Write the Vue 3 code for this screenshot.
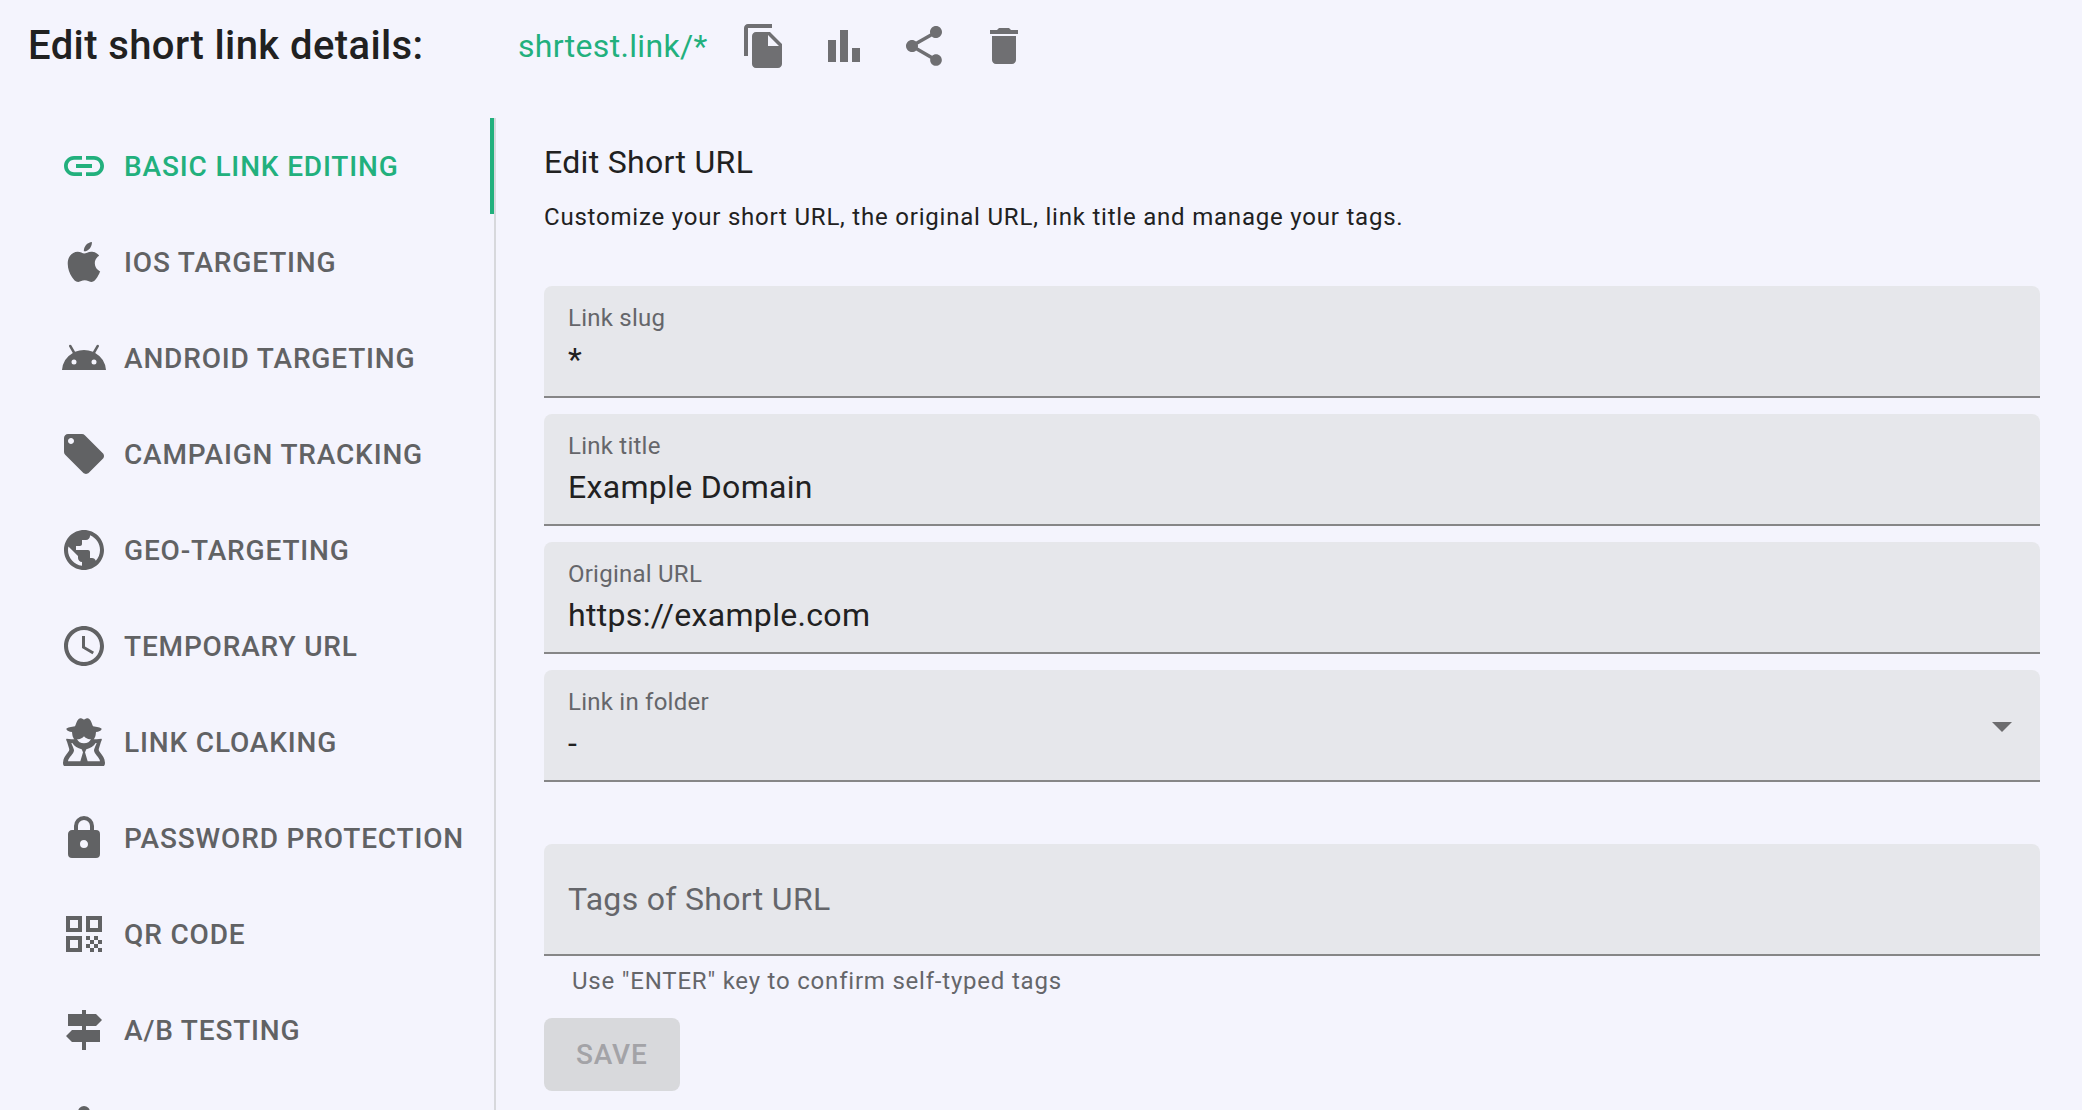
<script setup>
import { ref } from 'vue'

const tabs = [
  { label: 'Basic link editing', icon: 'M3.9 12c0-1.71 1.39-3.1 3.1-3.1h4V7H7c-2.76 0-5 2.24-5 5s2.24 5 5 5h4v-1.9H7c-1.71 0-3.1-1.39-3.1-3.1zM8 13h8v-2H8v2zm9-6h-4v1.9h4c1.71 0 3.1 1.39 3.1 3.1s-1.39 3.1-3.1 3.1h-4V17h4c2.76 0 5-2.24 5-5s-2.24-5-5-5z' },
  { label: 'iOS targeting', icon: 'M18.71 19.5C17.88 20.74 17 21.95 15.66 21.97C14.32 22 13.89 21.18 12.37 21.18C10.84 21.18 10.37 21.95 9.1 22C7.79 22.05 6.8 20.68 5.96 19.47C4.25 17 2.94 12.45 4.7 9.39C5.57 7.87 7.13 6.91 8.82 6.88C10.1 6.86 11.32 7.75 12.11 7.75C12.89 7.75 14.37 6.68 15.92 6.84C16.57 6.87 18.39 7.1 19.56 8.82C19.47 8.88 17.39 10.1 17.41 12.63C17.44 15.65 20.06 16.66 20.09 16.67C20.06 16.74 19.67 18.11 18.71 19.5M13 3.5C13.73 2.67 14.94 2.04 15.94 2C16.07 3.17 15.6 4.35 14.9 5.19C14.21 6.04 13.07 6.7 11.95 6.61C11.8 5.46 12.36 4.26 13 3.5Z' },
  { label: 'Android targeting', icon: 'M17.6 9.48l1.84-3.18c.16-.31.04-.69-.26-.85-.29-.15-.65-.06-.83.22l-1.88 3.24a11.463 11.463 0 0 0-8.94 0L5.65 5.67c-.19-.29-.58-.38-.87-.2-.28.18-.37.54-.22.83L6.4 9.48A10.78 10.78 0 0 0 1 18h22a10.78 10.78 0 0 0-5.4-8.52zM7 15.25a1.25 1.25 0 1 1 0-2.5 1.25 1.25 0 0 1 0 2.5zm10 0a1.25 1.25 0 1 1 0-2.5 1.25 1.25 0 0 1 0 2.5z' },
  { label: 'Campaign tracking', icon: 'M21.41 11.58l-9-9C12.05 2.22 11.55 2 11 2H4c-1.1 0-2 .9-2 2v7c0 .55.22 1.05.59 1.42l9 9c.36.36.86.58 1.41.58.55 0 1.05-.22 1.41-.59l7-7c.37-.36.59-.86.59-1.41 0-.55-.23-1.06-.59-1.42zM5.5 7C4.67 7 4 6.33 4 5.5S4.67 4 5.5 4 7 4.67 7 5.5 6.33 7 5.5 7z' },
  { label: 'Geo-targeting', icon: 'M12 2C6.48 2 2 6.48 2 12s4.48 10 10 10 10-4.48 10-10S17.52 2 12 2zm-1 17.93c-3.95-.49-7-3.85-7-7.93 0-.62.08-1.21.21-1.79L9 15v1c0 1.1.9 2 2 2v1.93zm6.9-2.54c-.26-.81-1-1.39-1.9-1.39h-1v-3c0-.55-.45-1-1-1H8v-2h2c.55 0 1-.45 1-1V7h2c1.1 0 2-.9 2-2v-.41c2.93 1.19 5 4.06 5 7.41 0 2.08-.8 3.97-2.1 5.39z' },
  { label: 'Temporary URL', icon: 'M11.99 2C6.47 2 2 6.48 2 12s4.47 10 9.99 10C17.52 22 22 17.52 22 12S17.52 2 11.99 2zM12 20c-4.42 0-8-3.58-8-8s3.58-8 8-8 8 3.58 8 8-3.58 8-8 8zm.5-13H11v6l5.25 3.15.75-1.23-4.5-2.67z' },
  { label: 'Link cloaking', box: '0 0 144 144', icon: 'M72 5C66 2 61 -1 56 3C50 8 49 17 45 25C34 27 22 28 19 33C20 39 28 41 36 42L37 50C38 56 40 60 43 64L34 64L20 62C17 63 19 68 21 71L27 91C29 96 27 99 24 103C16 113 10 121 9 134C9 141 11 144 15 144H129C133 144 135 141 135 134C134 121 128 113 120 103C117 99 115 96 117 91L123 71C125 68 127 63 124 62L110 64L101 64C104 60 106 56 107 50L108 42C116 41 124 39 125 33C122 28 110 27 99 25C95 17 94 8 88 3C83 -1 78 2 72 5ZM51 63C58 65 67 61 72 55C77 61 86 65 93 63C90 71 82 76 72 76C62 76 54 71 51 63ZM37 75C43 85 53 90 65 94L69 103L61 130H24C25 118 43 107 42 96C41 91 36 81 34 75ZM107 75C101 85 91 90 79 94L75 103L83 130H120C119 118 101 107 102 96C103 91 108 81 110 75Z' },
  { label: 'Password protection', icon: 'M12 17A2 2 0 0 0 14 15C14 13.89 13.1 13 12 13A2 2 0 0 0 10 15A2 2 0 0 0 12 17M18 8A2 2 0 0 1 20 10V20A2 2 0 0 1 18 22H6A2 2 0 0 1 4 20V10C4 8.89 4.9 8 6 8H7V6A5 5 0 0 1 12 1A5 5 0 0 1 17 6V8H18M12 3A3 3 0 0 0 9 6V8H15V6A3 3 0 0 0 12 3Z' },
  { label: 'QR code', icon: 'M3 11h8V3H3v8zm2-6h4v4H5V5zM3 21h8v-8H3v8zm2-6h4v4H5v-4zM13 3v8h8V3h-8zm6 6h-4V5h4v4zM13 13h2v2h-2zM17 13h2v2h-2zM15 15h2v2h-2zM19 15h2v2h-2zM13 17h2v2h-2zM17 17h2v2h-2zM15 19h2v2h-2zM19 19h2v2h-2z' },
  { label: 'A/B testing', icon: 'M13 10h5l3-3-3-3h-5V2h-2v2H4v6h7v2H6l-3 3 3 3h5v4h2v-4h7v-6h-7v-2z' },
  { label: '', icon: 'M12 2a3 3 0 1 1 0 6 3 3 0 0 1 0-6zM5 22v-7a5 5 0 0 1 5-5h4a5 5 0 0 1 5 5v7z' },
]

const actions = [
  { name: 'Copy', icon: 'M16 1H4c-1.1 0-2 .9-2 2v14h2V3h12V1zm-1 4l6 6v10c0 1.1-.9 2-2 2H7.99C6.89 23 6 22.1 6 21l.01-14c0-1.1.89-2 1.99-2h7zm-1 7h5.5L14 6.5V12z' },
  { name: 'Statistics', icon: 'M4 9h4v11H4zM10 4h4v16h-4zM16 13h4v7h-4z' },
  { name: 'Share', icon: 'M18 16.08c-.76 0-1.44.3-1.96.77L8.91 12.7c.05-.23.09-.46.09-.7s-.04-.47-.09-.7l7.05-4.11c.54.5 1.25.81 2.04.81 1.66 0 3-1.34 3-3s-1.34-3-3-3-3 1.34-3 3c0 .24.04.47.09.7L8.04 9.81C7.5 9.31 6.79 9 6 9c-1.66 0-3 1.34-3 3s1.34 3 3 3c.79 0 1.5-.31 2.04-.81l7.12 4.16c-.05.21-.08.43-.08.65 0 1.61 1.31 2.92 2.92 2.92 1.61 0 2.92-1.31 2.92-2.92s-1.31-2.92-2.92-2.92z' },
  { name: 'Delete', icon: 'M6 19c0 1.1.9 2 2 2h8c1.1 0 2-.9 2-2V7H6v12zM19 4h-3.5l-1-1h-5l-1 1H5v2h14V4z' },
]

const active = ref(0)
const slug = ref('*')
const title = ref('Example Domain')
const url = ref('https://example.com')
const folder = ref('-')
const tags = ref('')
</script>

<template>
  <div class="page">
    <header class="top">
      <h1>Edit short link details:</h1>
      <a class="short" href="#">shrtest.link/*</a>
      <div class="actions">
        <button v-for="a in actions" :key="a.name" type="button" :aria-label="a.name">
          <svg viewBox="0 0 24 24"><path :d="a.icon" /></svg>
        </button>
      </div>
    </header>

    <div class="body">
      <nav class="tabs">
        <button
          v-for="(t, i) in tabs"
          :key="i"
          type="button"
          :class="{ active: active === i }"
          @click="active = i"
        >
          <svg :viewBox="t.box || '0 0 24 24'"><path :d="t.icon" fill-rule="evenodd" /></svg>
          <span>{{ t.label.toUpperCase() }}</span>
        </button>
      </nav>

      <main class="panel">
        <h2>Edit Short URL</h2>
        <p class="intro">Customize your short URL, the original URL, link title and manage your tags.</p>

        <form @submit.prevent>
          <div class="field">
            <label for="slug">Link slug</label>
            <input id="slug" v-model="slug" type="text" />
          </div>
          <div class="field">
            <label for="title">Link title</label>
            <input id="title" v-model="title" type="text" />
          </div>
          <div class="field">
            <label for="url">Original URL</label>
            <input id="url" v-model="url" type="text" />
          </div>
          <div class="field">
            <label for="folder">Link in folder</label>
            <select id="folder" v-model="folder">
              <option>-</option>
            </select>
            <svg class="arrow" viewBox="0 0 20 10"><path d="M0 0h20L10 10z" /></svg>
          </div>
          <div class="field tags">
            <input v-model="tags" type="text" aria-label="Tags of Short URL" placeholder="Tags of Short URL" />
          </div>
          <p class="hint">Use "ENTER" key to confirm self-typed tags</p>
          <button class="save" type="submit" disabled>SAVE</button>
        </form>
      </main>
    </div>
  </div>
</template>

<style>
body {
  margin: 0;
  background: #f4f4fd;
}
</style>

<style scoped>
.page {
  display: flex;
  flex-direction: column;
  height: 100vh;
  overflow: hidden;
  background: #f4f4fd;
  color: #212121;
  font-family: Roboto, "Liberation Sans", sans-serif;
  -webkit-font-smoothing: antialiased;
}

h1,
h2,
p {
  margin: 0;
}

button,
input,
select {
  border: 0;
  padding: 0;
  background: none;
  font-family: inherit;
  color: inherit;
}

svg {
  display: block;
  flex: none;
  width: 48px;
  height: 48px;
  fill: currentColor;
}

/* Regular text carries light tracking, buttons and captions a wider one */
h1,
h2,
.short,
.field label,
.field input,
.field select {
  letter-spacing: 0.01em;
}

.tabs button,
.save {
  letter-spacing: 0.03em;
}

.intro,
.hint {
  letter-spacing: 0.033em;
}

.top {
  display: flex;
  align-items: center;
  flex: none;
  height: 92px;
  margin-bottom: 26px;
  padding-left: 28px;
}

h1 {
  width: 490px;
  font-size: 40px;
  font-weight: 500;
  line-height: 48px;
}

.short {
  color: #22b07d;
  font-size: 32px;
  line-height: 40px;
  text-decoration: none;
}

.actions {
  display: flex;
  gap: 32px;
  margin-left: 32px;
  color: #6f6f72;
}

.body {
  display: flex;
  flex: 1;
  min-height: 0;
}

.tabs {
  display: flex;
  flex-direction: column;
  flex: none;
  width: 494px;
  overflow: hidden;
  border-right: 2px solid #d7d8dc;
}

.tabs button {
  display: flex;
  align-items: center;
  gap: 16px;
  flex: none;
  height: 96px;
  padding-left: 60px;
  border-right: 4px solid transparent;
  color: #616264;
  font-size: 28px;
  font-weight: 500;
}

.tabs .active {
  border-right-color: #22b07d;
  color: #22b07d;
}

.panel {
  flex: 1;
  min-width: 0;
  padding: 24px 42px 0 48px;
}

h2 {
  font-size: 32px;
  font-weight: 400;
  line-height: 40px;
}

.intro {
  margin: 15px 0 49px;
  font-size: 24px;
  line-height: 40px;
}

.field {
  position: relative;
  display: flex;
  flex-direction: column;
  gap: 8px;
  margin-bottom: 16px;
  padding: 18px 24px;
  border-bottom: 2px solid #868687;
  border-radius: 8px 8px 0 0;
  background: #e6e7eb;
}

.field label {
  color: #65666a;
  font-size: 24px;
  line-height: 28px;
}

.field input,
.field select {
  width: 100%;
  height: 38px;
  outline: 0;
  appearance: none;
  font-size: 32px;
  line-height: 38px;
}

.arrow {
  position: absolute;
  top: 52px;
  right: 28px;
  width: 20px;
  height: 10px;
  color: #6c6c6e;
  pointer-events: none;
}

.tags {
  margin-top: 62px;
  padding: 36px 24px;
}

.tags input::placeholder {
  color: #65666a;
  opacity: 1;
}

.hint {
  margin: -8px 28px 20px;
  color: #65666a;
  font-size: 24px;
  line-height: 34px;
}

.save {
  height: 73px;
  padding: 0 32px;
  border-radius: 8px;
  background: #d8d9dc;
  color: #a3a3a7;
  font-size: 28px;
  font-weight: 500;
}
</style>
